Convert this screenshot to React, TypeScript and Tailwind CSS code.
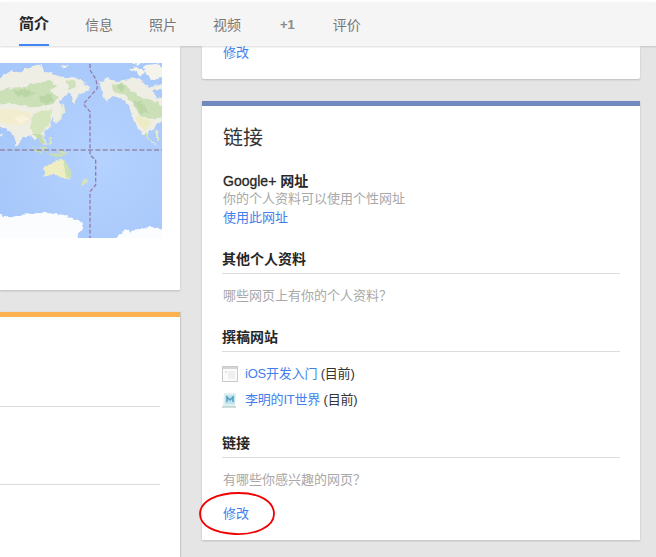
const font = "font-['Liberation_Sans','Noto_Sans_CJK_SC',sans-serif]";

const tabs = [
  { label: "简介", active: true },
  { label: "信息" },
  { label: "照片" },
  { label: "视频" },
  { label: "+1" },
  { label: "评价" },
];

function WorldMap() {
  return (
    <svg width="162" height="175" viewBox="0 9 486 525" className="block">
      <defs>
        <radialGradient id="sea" cx="62%" cy="55%" r="70%">
          <stop offset="0%" stopColor="#b5d2ff" />
          <stop offset="100%" stopColor="#a6c7fa" />
        </radialGradient>
        <filter id="soft" x="-5%" y="-5%" width="110%" height="110%" colorInterpolationFilters="sRGB">
          <feTurbulence type="fractalNoise" baseFrequency="0.07" numOctaves="2" seed="4" result="noise" />
          <feDisplacementMap in="SourceGraphic" in2="noise" scale="14" xChannelSelector="R" yChannelSelector="G" result="rough" />
          <feGaussianBlur in="rough" stdDeviation="1.6" />
        </filter>
      </defs>
      <rect x="0" y="9" width="486" height="525" fill="url(#sea)" />
      <g filter="url(#soft)">
        {/* asia */}
        <path
          d="M-10 66 L14 42 L32 30 L44 34 L58 38 L80 24 L125 12 L132 34 L160 42 L190 54 L215 48 L245 62 L270 82 L266 94 L245 100 L232 108 L222 138 L216 108 L205 100 L190 112 L176 124 L186 142 L194 160 L178 176 L166 188 L158 170 L150 196 L140 212 L130 228 L142 252 L126 254 L115 232 L104 240 L92 226 L72 232 L58 252 L50 258 L42 228 L22 206 L-10 198 Z"
          fill="#efeee4"
        />
        <path d="M-10 96 L30 84 L70 80 L105 70 L150 62 L172 78 L150 92 L176 110 L160 132 L122 140 L90 142 L60 136 L30 128 L-10 132 Z" fill="#cbe0b6" />
        <path d="M40 92 L85 88 L108 100 L80 112 L50 110 Z" fill="#bbd6a6" />
        <path d="M118 108 L150 102 L160 122 L138 134 L122 124 Z" fill="#bbd6a6" />
        <path d="M200 60 L228 66 L222 88 L204 86 Z" fill="#cfe2bb" />
        <path d="M-10 150 L40 146 L95 160 L85 190 L45 194 L15 190 L-10 182 Z" fill="#f2edcf" />
        <path d="M42 172 L72 168 L88 180 L58 190 Z" fill="#f8f3da" />
        <path d="M96 165 L130 150 L156 150 L150 190 L130 216 L108 224 L92 212 Z" fill="#d5e5bd" />
        <path d="M95 222 L122 218 L138 250 L124 252 L112 234 Z" fill="#c3dcae" />
        {/* japan and islands */}
        <path d="M186 132 L192 144 L190 160 L178 184 L168 192 L172 180 L182 160 Z" fill="#e7ecd4" />
        <path d="M146 234 L152 232 L156 254 L148 258 Z" fill="#d5e5bd" />
        <path d="M92 258 L112 268 L132 282 L122 284 L100 270 Z" fill="#c9dfb4" />
        <path d="M122 262 L140 258 L146 274 L130 274 Z" fill="#c9dfb4" />
        <path d="M146 280 L172 280 L205 288 L172 290 L148 288 Z" fill="#c9dfb4" />
        <path d="M172 268 L205 276 L196 284 L176 278 Z" fill="#cfe2bb" />
        <path d="M180 15 L205 18 L190 24 Z" fill="#f1f1e8" />
        <path d="M-10 218 L8 222 L6 232 L-10 232 Z" fill="#efeee4" />
        {/* australia and new zealand */}
        <path d="M130 322 L150 312 L165 302 L185 296 L195 306 L207 325 L213 345 L204 358 L185 352 L165 345 L150 344 L134 350 Z" fill="#eeeec2" />
        <path d="M190 298 L205 320 L213 345 L203 356 L192 335 Z" fill="#cbe0b3" />
        <path d="M262 350 L258 370 L240 384 L248 368 Z" fill="#d5e5b8" />
        {/* north america */}
        <path
          d="M298 66 L322 54 L352 64 L385 58 L405 48 L425 62 L452 82 L496 70 L496 178 L468 196 L456 212 L446 214 L440 236 L458 246 L478 262 L452 246 L428 222 L408 198 L396 170 L388 140 L366 116 L338 108 L318 126 L306 96 Z"
          fill="#efeee4"
        />
        <path d="M332 74 L368 70 L390 88 L420 112 L470 124 L496 150 L496 172 L450 176 L420 168 L398 130 L372 104 L342 96 Z" fill="#cbe0b6" />
        <path d="M350 78 L366 74 L376 92 L358 94 Z" fill="#bbd6a6" />
        <path d="M402 120 L430 130 L450 160 L418 160 Z" fill="#bdd7a8" />
        <path d="M405 168 L442 176 L452 190 L436 212 L418 196 Z" fill="#ecebc4" />
        <path d="M440 214 L446 238 L462 250 L444 240 L432 224 Z" fill="#cfe2b4" />
        <path d="M386 28 L412 20 L440 36 L420 46 Z" fill="#f4f4ec" />
        <path d="M430 16 L470 12 L496 28 L496 52 L456 60 L440 44 Z" fill="#f4f4ec" />
        <path d="M394 9 L430 9 L416 16 Z" fill="#f7f7f2" />
        {/* hudson bay */}
        <path d="M458 92 L496 88 L496 116 L470 114 Z" fill="#a9c9fb" />
        <path d="M470 205 L478 240 L472 244 L466 216 Z" fill="#e9ecc8" />
        {/* antarctica */}
        <path d="M-10 462 L30 472 L66 464 L130 458 L190 464 L238 482 L250 494 L228 544 L-10 544 Z" fill="#fbfcfe" />
        <path d="M335 544 L368 514 L420 510 L445 500 L496 506 L496 544 Z" fill="#fbfcfe" />
      </g>
      {/* date line and equator */}
      <path
        d="M270 12 L270 30 L288 58 L292 85 L250 132 L270 155 L270 285 L287 300 L287 375 L270 395 L270 534"
        fill="none"
        stroke="#8e6f95"
        strokeWidth="4"
        strokeDasharray="12 6"
        opacity="0.85"
      />
      <path d="M0 270 L486 270" stroke="#8e7f9f" strokeWidth="5" strokeDasharray="15 7" opacity="0.85" />
    </svg>
  );
}

function PageIcon() {
  return (
    <svg width="16" height="16" viewBox="0 0 16 16" className="shrink-0">
      <rect x="0.5" y="0.5" width="15" height="15" fill="#fbfbfb" stroke="#c9c9c9" />
      <rect x="1" y="1" width="14" height="2" fill="#d5d5d5" />
      <rect x="6" y="5" width="7" height="8" fill="#efefef" />
      <rect x="3" y="5" width="2" height="2" fill="#e2e2e2" />
    </svg>
  );
}

function BlogIcon() {
  return (
    <svg width="16" height="16" viewBox="0 0 16 16" className="shrink-0">
      <path d="M2 1 H14 L13 15 H1 Z" fill="#dff0ee" />
      <rect x="3" y="3" width="10" height="9" fill="#bfe3ef" />
      <path d="M5 10 V5 L8 8 L11 5 V10" fill="none" stroke="#4c9cc0" strokeWidth="1.4" />
      <path d="M0 15 H14" stroke="#9fc4bb" />
    </svg>
  );
}

function SectionHead({ children }: { children: string }) {
  return (
    <div className="-ml-px border-b border-[#dcdcdc] pb-[3px] text-[14px] leading-[22px] font-bold text-[#262626]">
      {children}
    </div>
  );
}

export default function App() {
  return (
    <div className={`${font} relative flex h-[557px] w-[656px] flex-col overflow-hidden bg-[#e5e5e5]`}>
      <div className="h-[2px] bg-white" />
      <nav className="z-10 flex h-[44px] shrink-0 items-stretch bg-[#f5f5f5] pl-[19px] shadow-[0_1px_2px_rgba(0,0,0,0.15)]">
        {tabs.map((tab) => (
          <div
            key={tab.label}
            className={
              tab.active
                ? "mr-[36px] flex items-center border-b-2 border-[#4285f4] pt-[2px] text-[15px] font-bold text-[#262626]"
                : tab.label === "+1"
                  ? "mr-[38px] ml-[3px] flex items-center pt-[2px] text-[13px] font-bold text-[#8a8a8a]"
                  : "mr-[36px] flex items-center pt-[2px] text-[14px] text-[#777777]"
            }
          >
            {tab.label}
          </div>
        ))}
      </nav>

      <div className="flex min-h-0 flex-1 items-start gap-[22px]">
        {/* left column, cut off by the window edge */}
        <div className="w-[180px] shrink-0">
          <div className="h-[244px] bg-white pt-[17px] shadow-[0_1px_2px_rgba(0,0,0,0.18)]">
            <WorldMap />
          </div>
          <div className="mt-[22px] h-[300px] border-t-[5px] border-[#fcb251] bg-white shadow-[1px_0_1px_rgba(0,0,0,0.12)]">
            <div className="mt-[89px] mr-[20px] h-px bg-[#dcdcdc]" />
            <div className="mt-[77px] mr-[20px] h-px bg-[#dcdcdc]" />
          </div>
        </div>

        {/* right column */}
        <div className="w-[438px] shrink-0">
          <div className="h-[33px] rounded-b-[2px] bg-white pl-[21px] shadow-[0_1px_2px_rgba(0,0,0,0.18)]">
            <a className="block text-[13px] leading-[14px] text-[#427fed]">修改</a>
          </div>

          <div className="mt-[22px] h-[439px] border-t-[5px] border-[#7289c0] bg-white pt-[19px] pr-[20px] pl-[21px] shadow-[0_1px_2px_rgba(0,0,0,0.18)]">
            <h2 className="text-[20px] leading-[26px] font-normal text-[#333333]">链接</h2>

            <div className="mt-[20px] text-[14px] leading-[20px] text-[#262626]">
              <span className="[-webkit-text-stroke:0.3px_#262626]">Google+</span> <span className="font-bold">网址</span>
            </div>
            <div className="text-[13px] leading-[16px] text-[#a8a8a8]">你的个人资料可以使用个性网址</div>
            <a className="mt-px block text-[13px] leading-[20px] text-[#427fed]">使用此网址</a>

            <div className="mt-[20px]">
              <SectionHead>其他个人资料</SectionHead>
              <p className="mt-[12px] text-[13px] leading-[20px] text-[#a8a8a8]">哪些网页上有你的个人资料？</p>
            </div>

            <div className="mt-[20px]">
              <SectionHead>撰稿网站</SectionHead>
              <div className="mt-[12px] -ml-px flex h-[20px] items-center gap-[7px] text-[13px]">
                <PageIcon />
                <span className="tracking-[-0.2px] text-[#333333]">
                  <a className="text-[#427fed]">iOS开发入门</a> (目前)
                </span>
              </div>
              <div className="mt-[6px] -ml-px flex h-[20px] items-center gap-[7px] text-[13px]">
                <BlogIcon />
                <span className="tracking-[-0.2px] text-[#333333]">
                  <a className="text-[#427fed]">李明的IT世界</a> (目前)
                </span>
              </div>
            </div>

            <div className="mt-[22px]">
              <SectionHead>链接</SectionHead>
              <p className="mt-[12px] text-[13px] leading-[20px] text-[#a8a8a8]">有哪些你感兴趣的网页？</p>
              <a className="mt-[14px] block text-[13px] leading-[20px] text-[#427fed]">修改</a>
            </div>
          </div>
        </div>
      </div>

      {/* red annotation drawn over the screenshot */}
      <svg width="80" height="48" viewBox="0 0 80 48" className="absolute top-[490px] left-[197px]">
        <path
          d="M3 24 C3 11 20 3 42 3 C62 3 77 11 77 24 C77 37 58 45 38 44 C18 43 3 36 3 24 Z"
          fill="none"
          stroke="#f00000"
          strokeWidth="1.8"
        />
      </svg>
    </div>
  );
}
